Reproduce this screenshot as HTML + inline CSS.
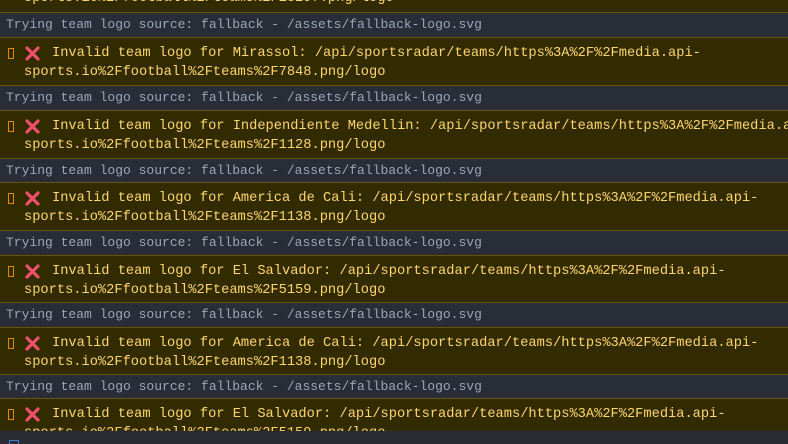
<!DOCTYPE html>
<html><head><style>
html,body{margin:0;width:788px;height:444px;overflow:hidden}
body{background:#282d37;font-family:"Liberation Mono",monospace;font-size:13px;position:relative}
.r{position:absolute;left:0;width:788px;box-sizing:border-box;white-space:pre;overflow:hidden;border-top:1px solid #665500}
.i{background:#282d37;color:#9ba6b9;height:25px;line-height:23px;padding-left:6px}
.w{background:#332b00;color:#fdd56d;height:49px;line-height:19px;padding:6px 0 0 24px;font-size:13.7px}
.w .ic{position:absolute;left:8px;width:6px;height:11px;border:1px solid #e08a00;box-sizing:border-box}
.w svg{position:absolute;left:25px}
.w .t1{padding-left:28px}
.bar{position:absolute;left:0;top:431px;width:788px;height:13px;background:#292c33}
.bar .b{position:absolute;left:9px;top:9px;width:8px;height:8px;border:1px solid #3b7bd6}
</style></head><body>
<div class="r w" style="top:-37px"><span class="t1"> </span>
sports.io%2Ffootball%2Fteams%2F18297.png/logo</div>
<div class="r i" style="top:12px">Trying team logo source: fallback - /assets/fallback-logo.svg</div>
<div class="r w" style="top:37px"><span class="ic" style="top:10px"></span><svg style="top:8px" width="15" height="15" viewBox="0 0 15 15"><path d="M2 2L13 13M13 2L2 13" stroke="#f0506e" stroke-width="3.2" stroke-linecap="round"/></svg><span class="t1">Invalid team logo for Mirassol: /api/sportsradar/teams/https%3A%2F%2Fmedia.api-</span>
sports.io%2Ffootball%2Fteams%2F7848.png/logo</div>
<div class="r i" style="top:85px">Trying team logo source: fallback - /assets/fallback-logo.svg</div>
<div class="r w" style="top:110px"><span class="ic" style="top:10px"></span><svg style="top:8px" width="15" height="15" viewBox="0 0 15 15"><path d="M2 2L13 13M13 2L2 13" stroke="#f0506e" stroke-width="3.2" stroke-linecap="round"/></svg><span class="t1">Invalid team logo for Independiente Medellin: /api/sportsradar/teams/https%3A%2F%2Fmedia.a</span>
sports.io%2Ffootball%2Fteams%2F1128.png/logo</div>
<div class="r i" style="top:158px">Trying team logo source: fallback - /assets/fallback-logo.svg</div>
<div class="r w" style="top:182px"><span class="ic" style="top:10px"></span><svg style="top:8px" width="15" height="15" viewBox="0 0 15 15"><path d="M2 2L13 13M13 2L2 13" stroke="#f0506e" stroke-width="3.2" stroke-linecap="round"/></svg><span class="t1">Invalid team logo for America de Cali: /api/sportsradar/teams/https%3A%2F%2Fmedia.api-</span>
sports.io%2Ffootball%2Fteams%2F1138.png/logo</div>
<div class="r i" style="top:230px">Trying team logo source: fallback - /assets/fallback-logo.svg</div>
<div class="r w" style="top:255px"><span class="ic" style="top:10px"></span><svg style="top:8px" width="15" height="15" viewBox="0 0 15 15"><path d="M2 2L13 13M13 2L2 13" stroke="#f0506e" stroke-width="3.2" stroke-linecap="round"/></svg><span class="t1">Invalid team logo for El Salvador: /api/sportsradar/teams/https%3A%2F%2Fmedia.api-</span>
sports.io%2Ffootball%2Fteams%2F5159.png/logo</div>
<div class="r i" style="top:302px">Trying team logo source: fallback - /assets/fallback-logo.svg</div>
<div class="r w" style="top:327px"><span class="ic" style="top:10px"></span><svg style="top:8px" width="15" height="15" viewBox="0 0 15 15"><path d="M2 2L13 13M13 2L2 13" stroke="#f0506e" stroke-width="3.2" stroke-linecap="round"/></svg><span class="t1">Invalid team logo for America de Cali: /api/sportsradar/teams/https%3A%2F%2Fmedia.api-</span>
sports.io%2Ffootball%2Fteams%2F1138.png/logo</div>
<div class="r i" style="top:374px">Trying team logo source: fallback - /assets/fallback-logo.svg</div>
<div class="r w" style="top:398px"><span class="ic" style="top:10px"></span><svg style="top:8px" width="15" height="15" viewBox="0 0 15 15"><path d="M2 2L13 13M13 2L2 13" stroke="#f0506e" stroke-width="3.2" stroke-linecap="round"/></svg><span class="t1">Invalid team logo for El Salvador: /api/sportsradar/teams/https%3A%2F%2Fmedia.api-</span>
sports.io%2Ffootball%2Fteams%2F5159.png/logo</div>
<div class="bar"><span class="b"></span></div>
</body></html>
